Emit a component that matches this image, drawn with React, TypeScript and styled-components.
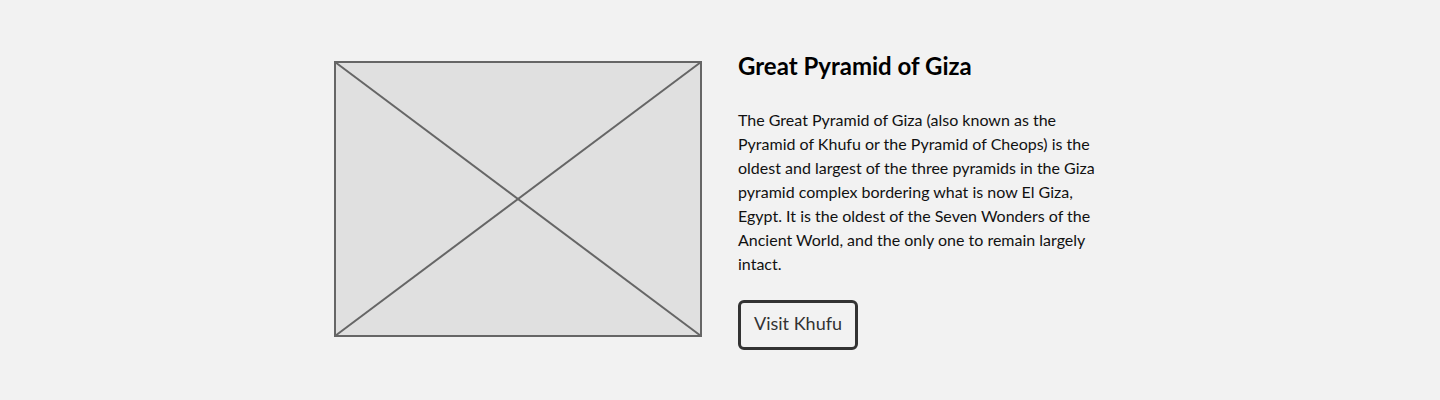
import React from "react";
import styled, { createGlobalStyle } from "styled-components";

const GlobalStyle = createGlobalStyle`
  html, body {
    margin: 0;
    padding: 0;
    background: #f2f2f2;
    font-family: Lato, "Open Sans", sans-serif;
    color: #111;
  }
`;

const Page = styled.main`
  width: 100%;
  height: 400px;
  background: #f2f2f2;
  display: flex;
  justify-content: center;
  align-items: flex-start;
  padding-top: 49px;
  box-sizing: border-box;
`;

const Feature = styled.section`
  display: grid;
  grid-template-columns: 368px 368px;
  column-gap: 36px;
  align-items: center;
`;

const Placeholder = styled.svg`
  display: block;
  width: 368px;
  height: 276px;
  margin-bottom: 2px;
`;

const Content = styled.div`
  display: flex;
  flex-direction: column;
  align-items: flex-start;
`;

const Title = styled.h2`
  margin: 0 0 26px;
  font-size: 24px;
  line-height: 33px;
  font-weight: 700;
  color: #000;
`;

const Body = styled.p`
  margin: 0 0 24px;
  font-size: 16px;
  line-height: 24px;
  color: #111;
`;

const Button = styled.button`
  font-family: Lato, sans-serif;
  font-size: 18px;
  line-height: 22px;
  color: #333;
  background: transparent;
  border: 3px solid #333;
  border-radius: 6px;
  padding: 9px 13px 13px;
  cursor: pointer;
`;

export default function App() {
  return (
    <>
      <GlobalStyle />
      <Page>
        <Feature>
          <Placeholder viewBox="0 0 368 276">
            <rect x="1" y="1" width="366" height="274" fill="#e0e0e0" stroke="#666" strokeWidth="2" />
            <line x1="1" y1="1" x2="367" y2="275" stroke="#666" strokeWidth="2" />
            <line x1="367" y1="1" x2="1" y2="275" stroke="#666" strokeWidth="2" />
          </Placeholder>
          <Content>
            <Title>Great Pyramid of Giza</Title>
            <Body>
              The Great Pyramid of Giza (also known as the Pyramid of Khufu or the Pyramid of Cheops) is the
              oldest and largest of the three pyramids in the Giza pyramid complex bordering what is now El Giza,
              Egypt. It is the oldest of the Seven Wonders of the Ancient World, and the only one to remain largely
              intact.
            </Body>
            <Button>Visit Khufu</Button>
          </Content>
        </Feature>
      </Page>
    </>
  );
}
